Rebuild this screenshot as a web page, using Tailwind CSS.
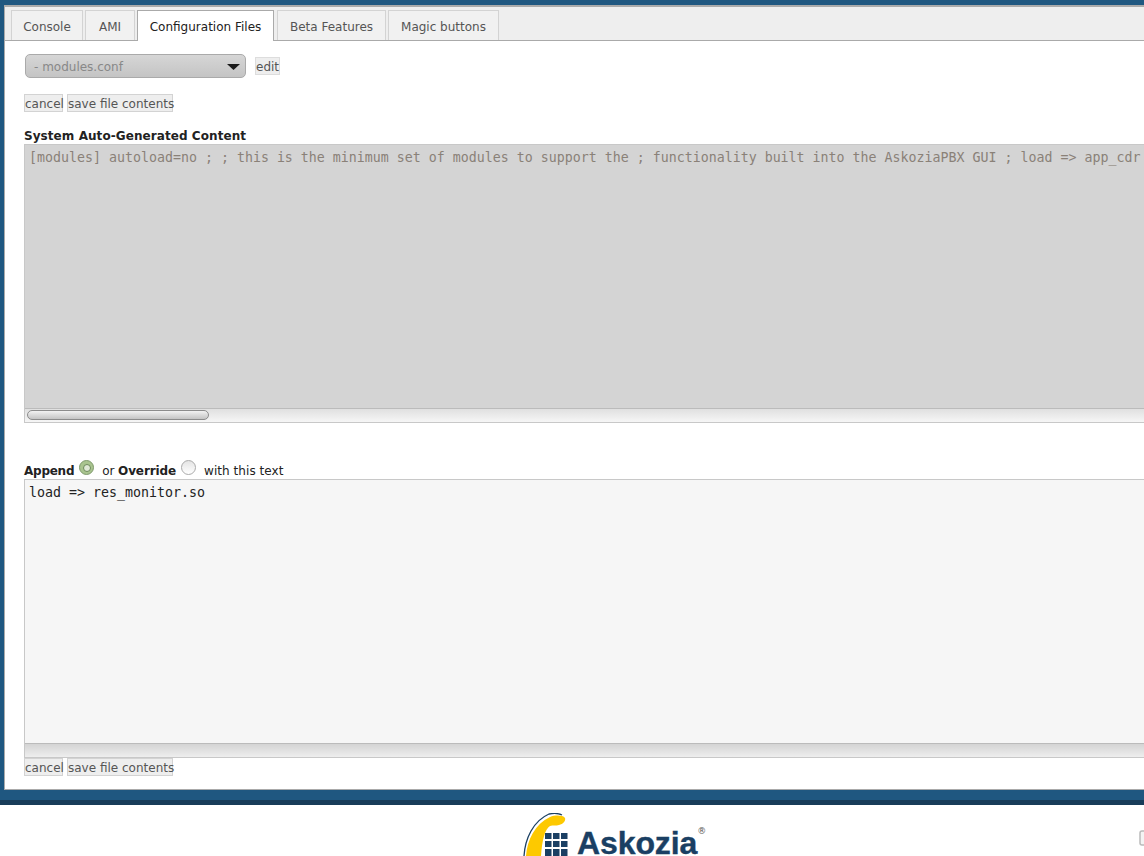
<!DOCTYPE html>
<html lang="en">
<head>
  <meta charset="UTF-8" />
  <title>Askozia Configuration Files</title>
  <script src="https://cdn.jsdelivr.net/npm/@tailwindcss/browser@4"></script>
</head>
<body class="h-[856px] overflow-hidden bg-white font-['DejaVu_Sans',sans-serif] text-[12px]">
  <!-- blue frame -->
  <div class="h-[800px] bg-[#1f5780] pt-[5px] pl-1 overflow-hidden">
    <div class="h-[785px] w-[1300px] bg-white border-t-2 border-l border-b border-[#aaaaaa] flex flex-col">
      <!-- tabs -->
      <div class="h-[34px] shrink-0 bg-[#eeeeee] border-b border-[#aaaaaa] flex items-end pl-[6px] gap-[2px]">
        <div class="h-[30px] pt-[2px] w-[72px] flex items-center justify-center bg-[#f1f1f1] border-t border-x border-[#d3d3d3] text-[#555555]">Console</div>
        <div class="h-[30px] pt-[2px] w-[50px] flex items-center justify-center bg-[#f1f1f1] border-t border-x border-[#d3d3d3] text-[#555555]">AMI</div>
        <div class="h-[31px] pt-[2px] mb-[-1px] w-[137px] flex items-center justify-center bg-white border-t border-x border-[#aaaaaa] text-[#212121]">Configuration Files</div>
        <div class="h-[30px] pt-[2px] w-[109px] ml-[1px] flex items-center justify-center bg-[#f1f1f1] border-t border-x border-[#d3d3d3] text-[#555555]">Beta Features</div>
        <div class="h-[30px] pt-[2px] w-[111px] flex items-center justify-center bg-[#f1f1f1] border-t border-x border-[#d3d3d3] text-[#555555]">Magic buttons</div>
      </div>

      <div class="pl-[19px] flex flex-col">
        <!-- file select -->
        <div class="mt-[13px] ml-[1px] flex items-center h-6">
          <div class="w-[221px] h-6 pt-px rounded-[5px] border border-[#aaaaaa] bg-gradient-to-b from-[#d6d6d6] to-[#c4c4c4] flex items-center justify-between pl-2 pr-[5px] text-[#888888]">
            <span>- modules.conf</span>
            <svg width="13" height="6" viewBox="0 0 13 6"><path d="M0 0h13L6.500 6z" fill="#1a1a1a"/></svg>
          </div>
          <button class="ml-[9px] h-[18px] w-[25px] pt-[2px] bg-[#eeeeee] border border-[#dddddd] text-[#555555] leading-none whitespace-nowrap">edit</button>
        </div>

        <div class="mt-[16px] flex gap-[4px]">
          <button class="h-[18px] w-[39px] pt-[2px] bg-[#eeeeee] border border-[#d3d3d3] text-[#555555] leading-none whitespace-nowrap">cancel</button>
          <button class="h-[18px] w-[106px] pt-[2px] bg-[#eeeeee] border border-[#d3d3d3] text-[#555555] leading-none whitespace-nowrap">save file contents</button>
        </div>

        <!-- generated content -->
        <div class="mt-[16px] h-[16px] leading-[17px] font-bold tracking-[0.07px] text-[#222222]">System Auto-Generated Content</div>
        <div class="w-[1250px] h-[279px] border border-[#c8c8c8] flex flex-col">
          <div class="h-[263px] bg-[#d4d4d4] pl-[4px] pt-[4px] font-['DejaVu_Sans_Mono',monospace] text-[13.29px] leading-[18px] whitespace-nowrap overflow-hidden text-[#8a8178]">[modules] autoload=no ; ; this is the minimum set of modules to support the ; functionality built into the AskoziaPBX GUI ; load =&gt; app_cdr</div>
          <div class="h-[14px] bg-gradient-to-b from-[#e0e0e0] to-[#f6f6f6] border-t border-[#bbbbbb] pl-[2px] pt-[1px]">
            <div class="w-[182px] h-[10px] rounded-[5px] border border-[#8c8c8c] bg-gradient-to-b from-[#f2f2f2] to-[#c4c4c4]"></div>
          </div>
        </div>

        <!-- append / override -->
        <div class="mt-[36px] h-[20px] flex items-end text-[#222222] leading-[16px]">
          <b class="tracking-[-0.25px]">Append</b>
          <span class="ml-[5px] mb-[4px] w-[15px] h-[15px] rounded-full border border-[#7f9a6c] bg-[#a9c48f] flex items-center justify-center">
            <span class="w-[8px] h-[8px] rounded-full bg-[#dfe8d6] border border-[#6d8a5a]"></span>
          </span>
          <span class="ml-[8px] tracking-[-0.1px]">or <b>Override</b></span>
          <span class="ml-[5px] mb-[4px] w-[15px] h-[15px] rounded-full border border-[#aaaaaa] bg-gradient-to-b from-[#e4e4e4] to-[#ffffff]"></span>
          <span class="ml-[8px] tracking-[0.05px]">with this text</span>
        </div>
        <div class="w-[1250px] h-[279px] border border-[#c8c8c8] flex flex-col">
          <div class="h-[263px] bg-[#f6f6f6] pl-[4px] pt-[4px] font-['DejaVu_Sans_Mono',monospace] text-[13.29px] leading-[18px] whitespace-nowrap overflow-hidden text-[#222222]">load =&gt; res_monitor.so</div>
          <div class="h-[14px] bg-gradient-to-b from-[#d4d4d4] to-[#eeeeee] border-t border-[#bbbbbb]"></div>
        </div>

        <div class="flex gap-[4px]">
          <button class="h-[18px] w-[39px] pt-[2px] bg-[#eeeeee] border border-[#d3d3d3] text-[#555555] leading-none whitespace-nowrap">cancel</button>
          <button class="h-[18px] w-[106px] pt-[2px] bg-[#eeeeee] border border-[#d3d3d3] text-[#555555] leading-none whitespace-nowrap">save file contents</button>
        </div>
      </div>
    </div>
  </div>
  <div class="h-[5px] bg-[#183c59]"></div>

  <!-- footer logo -->
  <div class="relative h-[51px] overflow-hidden">
    <div class="absolute left-[523px] top-[8px] flex items-start">
      <svg width="54" height="43" viewBox="0 0 54 43">
        <path d="M1 43C2 26 10 8 26 1c5-1 9-1 13 1" fill="none" stroke="#1a3f63" stroke-width="1.300"/>
        <path d="M3 43C4 27 12 11 27 4c5-2 13-2 15 1 1 3-2 6-6 7-3 1-6 0-9 1-5 3-8 14-9 30z" fill="#fdc900"/>
        <g fill="#1a3f63">
          <rect x="22" y="20" width="6.500" height="6"/><rect x="30" y="20" width="6.500" height="6"/><rect x="38" y="20" width="6.500" height="6"/>
          <rect x="22" y="28" width="6.500" height="6"/><rect x="30" y="28" width="6.500" height="6"/><rect x="38" y="28" width="6.500" height="6"/>
          <rect x="22" y="36" width="6.500" height="7"/><rect x="30" y="36" width="6.500" height="7"/><rect x="38" y="36" width="6.500" height="7"/>
        </g>
      </svg>
      <span class="mt-[12px] font-['Liberation_Sans',sans-serif] font-bold text-[32px] leading-[36px] tracking-[-0.1px] text-[#1a3f63] [-webkit-text-stroke:0.4px_#1a3f63]">Askozia</span>
      <span class="mt-[13px] text-[9px] leading-[11px] text-[#555555]">®</span>
    </div>
    <svg class="absolute left-[1139px] top-[25px]" width="8" height="16" viewBox="0 0 8 16"><rect x="1" y="1" width="10" height="14" rx="2" fill="#f4f4f4" stroke="#bbbbbb" stroke-width="1.500"/></svg>
  </div>
</body>
</html>
